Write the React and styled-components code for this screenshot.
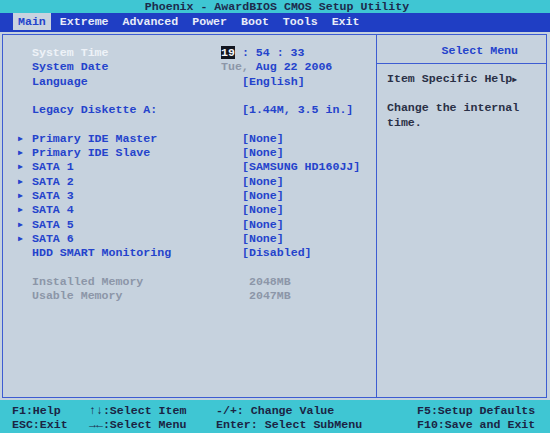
import React from 'react'
import styled, { createGlobalStyle } from 'styled-components'

const blue = '#2443cc'
const cyan = '#3fc6d3'
const panel = '#c6d2de'

const GlobalStyle = createGlobalStyle`
  html, body {
    margin: 0;
    padding: 0;
    background: ${panel};
  }
`

const items = [
  { label: 'System Time', time: true, selected: true },
  { label: 'System Date', date: true },
  { label: 'Language', value: '[English]', indent: 3 },
  {},
  { label: 'Legacy Diskette A:', value: '[1.44M, 3.5 in.]', indent: 3 },
  {},
  { label: 'Primary IDE Master', value: '[None]', indent: 3, sub: true },
  { label: 'Primary IDE Slave', value: '[None]', indent: 3, sub: true },
  { label: 'SATA 1', value: '[SAMSUNG HD160JJ]', indent: 3, sub: true },
  { label: 'SATA 2', value: '[None]', indent: 3, sub: true },
  { label: 'SATA 3', value: '[None]', indent: 3, sub: true },
  { label: 'SATA 4', value: '[None]', indent: 3, sub: true },
  { label: 'SATA 5', value: '[None]', indent: 3, sub: true },
  { label: 'SATA 6', value: '[None]', indent: 3, sub: true },
  { label: 'HDD SMART Monitoring', value: '[Disabled]', indent: 3 },
  {},
  { label: 'Installed Memory', value: '2048MB', indent: 4, muted: true },
  { label: 'Usable Memory', value: '2047MB', indent: 4, muted: true },
]

const menus = ['Main', 'Extreme', 'Advanced', 'Power', 'Boot', 'Tools', 'Exit']

const keys = [
  ['F1:Help', 'ESC:Exit'],
  ['↑↓:Select Item', '→←:Select Menu'],
  ['-/+: Change Value', 'Enter: Select SubMenu'],
  ['F5:Setup Defaults', 'F10:Save and Exit'],
]

export default function App() {
  return (
    <>
      <GlobalStyle />
      <Screen>
        <TitleBar>Phoenix - AwardBIOS CMOS Setup Utility</TitleBar>
        <MenuBar>
          {menus.map((m, i) => (
            <MenuItem key={m} active={i === 0}>
              {m}
            </MenuItem>
          ))}
        </MenuBar>
        <Body>
          <Frame>
            <ItemList>
              {items.map((item, index) => (
                <ItemRow key={index} item={item} />
              ))}
            </ItemList>
            <HelpPanel>
              <HelpHeader>Select Menu</HelpHeader>
              <HelpText>
                <HelpLine>
                  Item Specific Help<SmallArrow>▶</SmallArrow>
                </HelpLine>
                <HelpLine />
                <HelpLine>Change the internal</HelpLine>
                <HelpLine>time.</HelpLine>
              </HelpText>
            </HelpPanel>
          </Frame>
        </Body>
        <Footer>
          {keys.map((col, i) => (
            <KeyColumn key={i}>
              <span>{col[0]}</span>
              <span>{col[1]}</span>
            </KeyColumn>
          ))}
        </Footer>
      </Screen>
    </>
  )
}

function ItemRow({ item }) {
  if (!item.label) return <Row />
  return (
    <Row>
      <Arrow>{item.sub ? '▶' : ''}</Arrow>
      <Label selected={item.selected} muted={item.muted}>
        {item.label}
      </Label>
      {item.time && (
        <Value>
          <Cursor>19</Cursor> : 54 : 33
        </Value>
      )}
      {item.date && (
        <Value>
          <Dim>Tue,</Dim> Aug 22 2006
        </Value>
      )}
      {item.value && (
        <Value indent={item.indent} muted={item.muted}>
          {item.value}
        </Value>
      )}
    </Row>
  )
}

const Screen = styled.div`
  width: 550px;
  height: 433px;
  display: flex;
  flex-direction: column;
  background: ${panel};
  font-family: 'Liberation Mono', 'DejaVu Sans Mono', monospace;
  font-size: 11.6px;
  font-weight: bold;
  overflow: hidden;
`

const TitleBar = styled.div`
  height: 13px;
  line-height: 14px;
  background: ${cyan};
  color: #1d2a4c;
  text-align: center;
  padding-left: 4px;
`

const MenuBar = styled.div`
  height: 19px;
  background: #1f3ec4;
  display: flex;
  align-items: flex-start;
  padding-left: 13px;
  gap: 4px;
`

const MenuItem = styled.div`
  height: 17px;
  line-height: 18px;
  padding: 0 5px;
  color: ${({ active }) => (active ? '#2443cc' : '#e8ecf8')};
  background: ${({ active }) => (active ? '#c9d3df' : 'transparent')};
`

const Body = styled.div`
  flex: 1;
  padding: 2px 3px 2px 2px;
  display: flex;
`

const Frame = styled.div`
  flex: 1;
  display: grid;
  grid-template-columns: 374px 1fr;
  border: 1px solid #3d5cd2;
`

const ItemList = styled.div`
  padding: 11px 0 0 15px;
  border-right: 1px solid #3d5cd2;
`

const Row = styled.div`
  height: 14.3px;
  line-height: 14.3px;
  display: grid;
  grid-template-columns: 14px 189px 1fr;
  white-space: pre;
  color: ${blue};
`

const Arrow = styled.span`
  font-size: 8px;
  color: ${blue};
`

const Label = styled.span`
  color: ${({ selected, muted }) =>
    selected ? '#eef2f8' : muted ? '#8c96a8' : blue};
`

const Value = styled.span`
  padding-left: ${({ indent }) => (indent || 0) * 7}px;
  color: ${({ muted }) => (muted ? '#8c96a8' : blue)};
`

const Cursor = styled.span`
  background: #121620;
  color: #f2f4f8;
`

const Dim = styled.span`
  color: #8c96a8;
`

const HelpPanel = styled.div`
  display: flex;
  flex-direction: column;
`

const HelpHeader = styled.div`
  height: 28px;
  line-height: 31px;
  text-align: right;
  padding-right: 28px;
  color: ${blue};
  border-bottom: 1px solid #3d5cd2;
`

const HelpText = styled.div`
  padding: 8px 0 0 10px;
  color: #2a3046;
`

const HelpLine = styled.div`
  height: 14.6px;
  line-height: 14.6px;
  white-space: pre;
`

const SmallArrow = styled.span`
  font-size: 8px;
`

const Footer = styled.div`
  height: 33px;
  background: ${cyan};
  display: grid;
  grid-template-columns: 77px 127px 201px 1fr;
  padding: 4px 0 0 12px;
  box-sizing: border-box;
  color: #1b2444;
`

const KeyColumn = styled.div`
  display: flex;
  flex-direction: column;
  line-height: 14px;
  white-space: pre;
`
